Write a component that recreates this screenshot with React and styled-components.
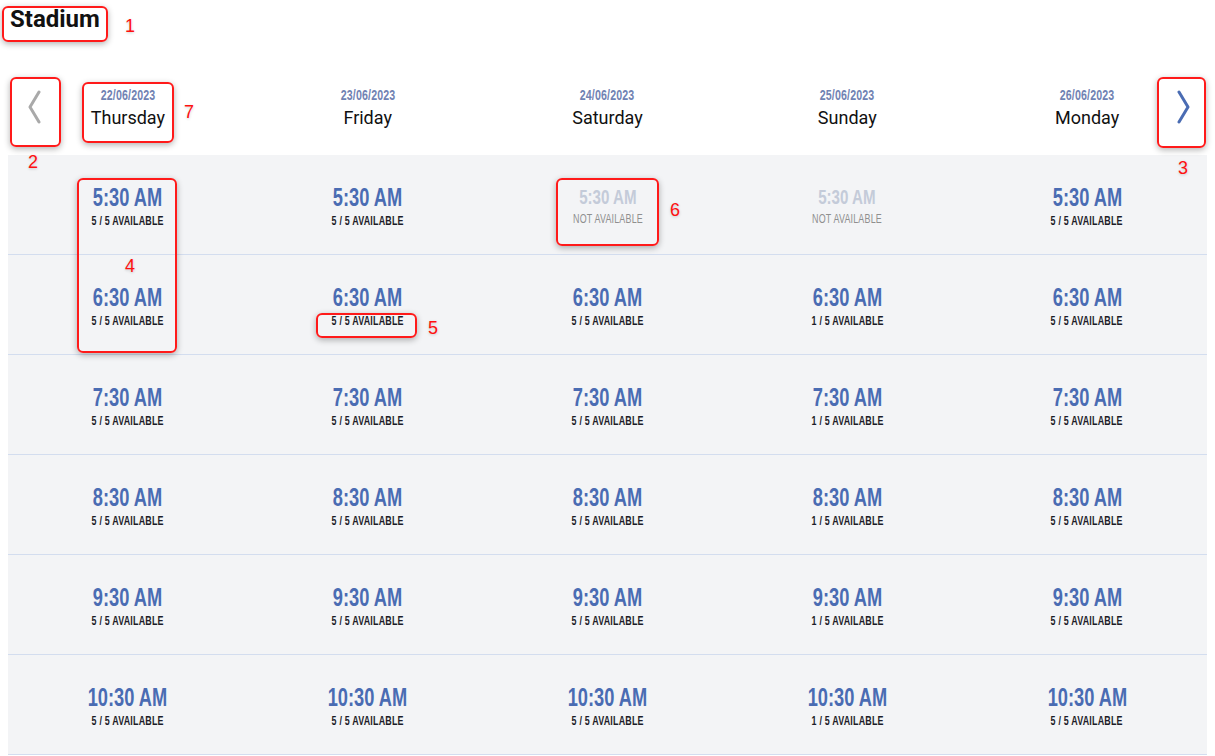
import React from "react";
import styled, { createGlobalStyle } from "styled-components";

const GlobalStyle = createGlobalStyle`
  body {
    margin: 0;
    background: #ffffff;
    font-family: Roboto, "Liberation Sans", sans-serif;
    color: #111111;
  }
`;

// no condensed face is installed, so the narrow look is squeezed from Arial metrics
const narrow = `"Liberation Sans", Arial, sans-serif`;

const days = [
  { date: "22/06/2023", name: "Thursday", free: [5, 5, 5, 5, 5, 5] },
  { date: "23/06/2023", name: "Friday", free: [5, 5, 5, 5, 5, 5] },
  { date: "24/06/2023", name: "Saturday", free: [null, 5, 5, 5, 5, 5] },
  { date: "25/06/2023", name: "Sunday", free: [null, 1, 1, 1, 1, 1] },
  { date: "26/06/2023", name: "Monday", free: [5, 5, 5, 5, 5, 5] },
];

const times = ["5:30 AM", "6:30 AM", "7:30 AM", "8:30 AM", "9:30 AM", "10:30 AM"];

const marks = [
  { n: 1, box: [2, 1, 106, 36], num: [125, 13] },
  { n: 2, box: [10, 72, 51, 70], num: [28, 149] },
  { n: 3, box: [1157, 72, 49, 71], num: [1178, 155] },
  { n: 4, box: [77, 173, 100, 175], num: [125, 253] },
  { n: 5, box: [316, 308, 101, 25], num: [428, 315] },
  { n: 6, box: [556, 173, 103, 68], num: [670, 197] },
  { n: 7, box: [82, 77, 92, 61], num: [184, 99] },
];

const Chevron = ({ dir, color }) => (
  <svg width="16" height="34" viewBox="0 0 16 34" fill="none">
    <polyline
      points={dir === "left" ? "13,2 4,17 13,32" : "3,2 12,17 3,32"}
      stroke={color}
      strokeWidth="3"
      strokeLinecap="round"
      strokeLinejoin="round"
    />
  </svg>
);

const App = () => {
  return (
    <>
      <GlobalStyle />
      <Page>
        <Title>Stadium</Title>

        <Header>
          <NavButton $side="left" aria-label="previous week">
            <Chevron dir="left" color="#a9a9a9" />
          </NavButton>
          {days.map((d) => (
            <DayCell key={d.date}>
              <DateText>{d.date}</DateText>
              <DayName>{d.name}</DayName>
            </DayCell>
          ))}
          <NavButton $side="right" aria-label="next week">
            <Chevron dir="right" color="#4a6cb3" />
          </NavButton>
        </Header>

        <Slots>
          {times.map((t, row) => (
            <SlotRow key={t}>
              {days.map((d) => {
                const free = d.free[row];
                const off = free === null;
                return (
                  <Slot key={d.date + t}>
                    <Time $off={off}>{t}</Time>
                    <Status $off={off}>
                      {off ? "NOT AVAILABLE" : `${free} / 5 AVAILABLE`}
                    </Status>
                  </Slot>
                );
              })}
            </SlotRow>
          ))}
        </Slots>

        {marks.map((m) => (
          <React.Fragment key={m.n}>
            <MarkBox $x={m.box[0]} $y={m.box[1]} $w={m.box[2]} $h={m.box[3]} />
            <MarkNum $x={m.num[0]} $y={m.num[1]}>
              {m.n}
            </MarkNum>
          </React.Fragment>
        ))}
      </Page>
    </>
  );
};

const Page = styled.div`
  position: relative;
  padding: 0 8px;
  min-height: 756px;
  box-sizing: border-box;
`;

const Title = styled.h1`
  margin: 5px 0 0 2px;
  font-family: Roboto, "Liberation Sans", sans-serif;
  font-size: 24px;
  line-height: 28px;
  font-weight: 700;
  color: #111111;
`;

const Header = styled.div`
  position: relative;
  margin-top: 27px;
  height: 95px;
  display: grid;
  grid-template-columns: repeat(5, 1fr);
`;

const NavButton = styled.button`
  position: absolute;
  top: 30px;
  ${({ $side }) => ($side === "left" ? "left: 18px;" : "right: 15px;")}
  display: flex;
  padding: 0;
  border: 0;
  background: transparent;
  cursor: pointer;
`;

const DayCell = styled.div`
  display: flex;
  flex-direction: column;
  align-items: center;
  padding-top: 27px;
  gap: 4px;
`;

const Squeezed = styled.span`
  display: inline-block;
  font-family: ${narrow};
  white-space: nowrap;
  transform-origin: center;
`;

const DateText = styled(Squeezed)`
  font-size: 14px;
  line-height: 16px;
  font-weight: 700;
  letter-spacing: 0.2px;
  transform: scaleX(0.76);
  color: #7183b3;
`;

const DayName = styled.span`
  font-family: Roboto, "Liberation Sans", sans-serif;
  font-size: 18px;
  line-height: 22px;
  color: #111111;
`;

const Slots = styled.div`
  background: #f3f4f6;
`;

const SlotRow = styled.div`
  display: grid;
  grid-template-columns: repeat(5, 1fr);
  height: 99px;
  border-bottom: 1px solid #d3ddef;
`;

const Slot = styled.div`
  display: flex;
  flex-direction: column;
  align-items: center;
  justify-content: center;
  padding-top: 2px;
  gap: 2px;
`;

const Time = styled(Squeezed)`
  font-weight: 700;
  font-size: ${({ $off }) => ($off ? "21px" : "25px")};
  line-height: ${({ $off }) => ($off ? "24px" : "28px")};
  transform: scaleX(${({ $off }) => ($off ? 0.72 : 0.73)});
  color: ${({ $off }) => ($off ? "#c4cbd9" : "#4a6cb3")};
`;

const Status = styled(Squeezed)`
  font-weight: ${({ $off }) => ($off ? 400 : 700)};
  font-size: 13.5px;
  line-height: 15px;
  letter-spacing: 0.3px;
  transform: scaleX(${({ $off }) => ($off ? 0.66 : 0.66)});
  color: ${({ $off }) => ($off ? "#8f8f8f" : "#1c1c28")};
`;

const MarkBox = styled.div`
  position: absolute;
  left: ${({ $x }) => $x}px;
  top: ${({ $y }) => $y}px;
  width: ${({ $w }) => $w}px;
  height: ${({ $h }) => $h}px;
  box-sizing: border-box;
  border: 2px solid #ff1a1a;
  border-radius: 6px;
  box-shadow: 0 2px 6px rgba(0, 0, 0, 0.3);
  pointer-events: none;
`;

const MarkNum = styled.span`
  position: absolute;
  left: ${({ $x }) => $x}px;
  top: ${({ $y }) => $y}px;
  width: 10px;
  text-align: center;
  font-family: "Liberation Sans", Arial, sans-serif;
  font-size: 18px;
  line-height: 17px;
  color: #ff1010;
  text-shadow: 0 1px 3px rgba(0, 0, 0, 0.2);
  pointer-events: none;
`;

export default App;
